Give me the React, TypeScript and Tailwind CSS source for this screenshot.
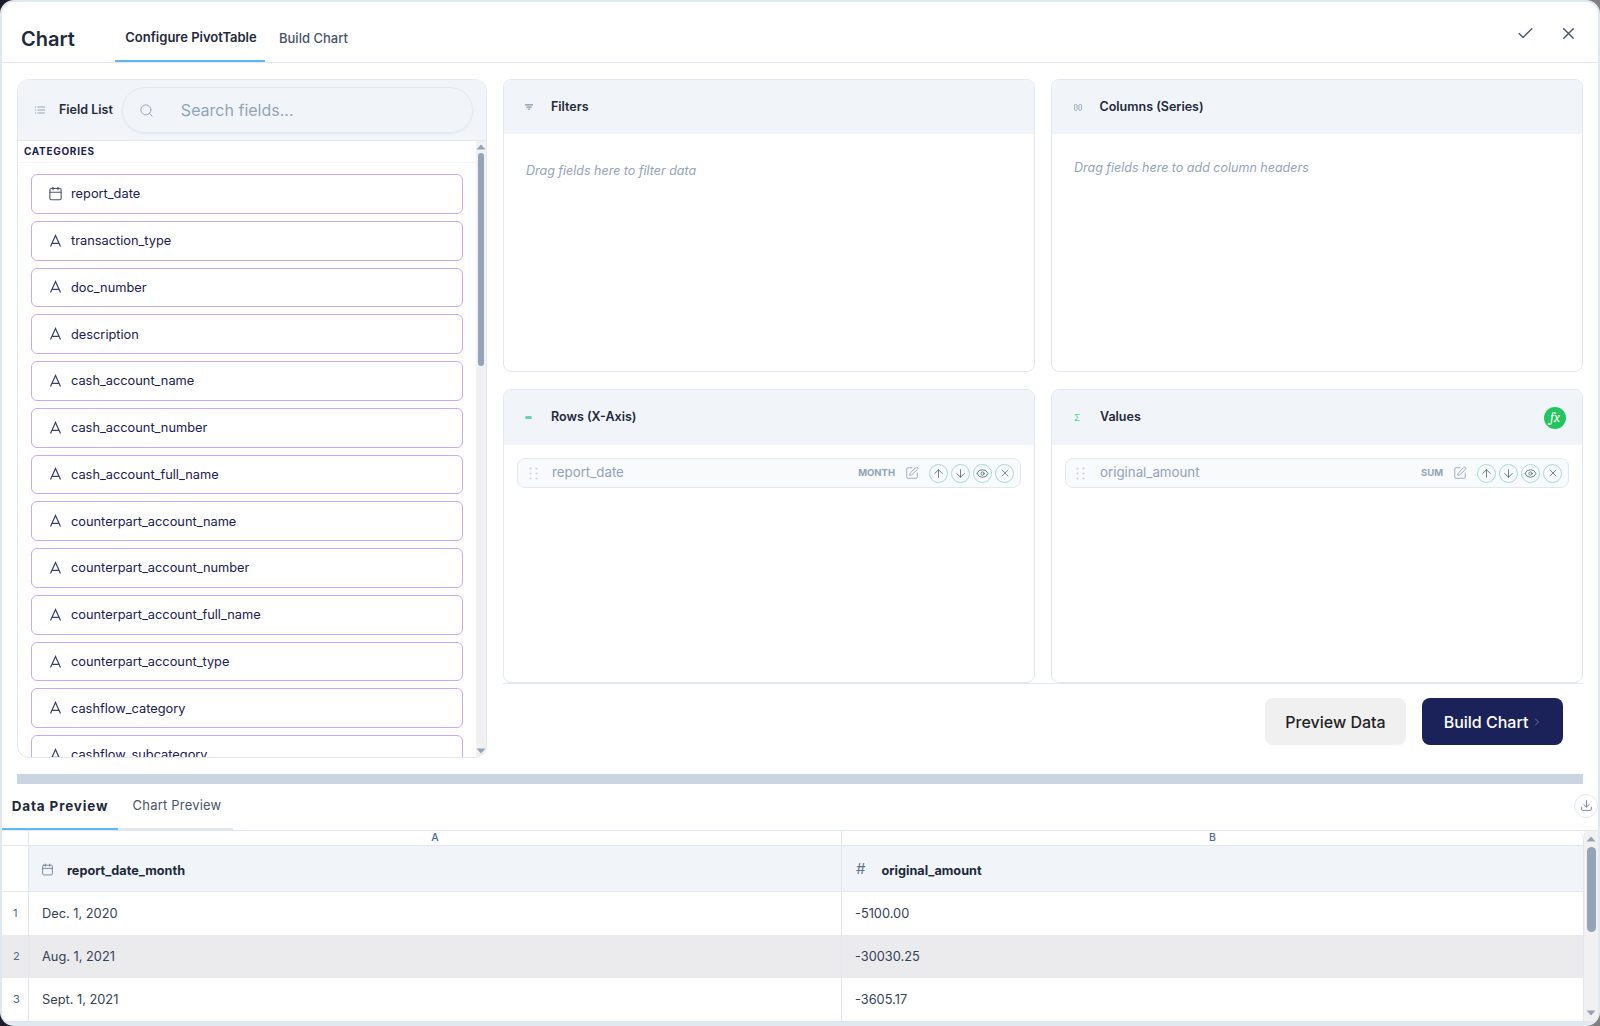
import { ArrowDown, ArrowUp, Calendar, Check, ChevronRight, Download, Eye, Search, SquarePen, X } from "lucide-react";

const fields = [
  "transaction_type",
  "doc_number",
  "description",
  "cash_account_name",
  "cash_account_number",
  "cash_account_full_name",
  "counterpart_account_name",
  "counterpart_account_number",
  "counterpart_account_full_name",
  "counterpart_account_type",
  "cashflow_category",
  "cashflow_subcategory",
];

const rows = [
  { n: 1, date: "Dec. 1, 2020", amount: "-5100.00" },
  { n: 2, date: "Aug. 1, 2021", amount: "-30030.25" },
  { n: 3, date: "Sept. 1, 2021", amount: "-3605.17" },
];

function TextIcon() {
  return (
    <svg width="16" height="16" viewBox="0 0 16 16" fill="none" stroke="#3a4168" strokeWidth="1.2" className="-ml-[0.5px]" aria-hidden>
      <path d="M2.5 13.5L7.5 2.5L12.5 13.5M4.2 10.3H10.8" />
    </svg>
  );
}

function FieldItem({ name, icon }: { name: string; icon: React.ReactNode }) {
  return (
    <div className="mb-[7px] flex h-[39.77px] shrink-0 items-center rounded-md border border-[#c8a8fa] bg-white pl-[16px] text-[12.8px] text-[#1a2050]">
      <span className="flex w-[23px] shrink-0 items-center">{icon}</span>
      {name}
    </div>
  );
}

function ScrollArrow({ up }: { up?: boolean }) {
  return (
    <svg width="10" height="6" viewBox="0 0 10 6" className="shrink-0" aria-hidden>
      <path d={up ? "M5 0.5L9.5 5.5H0.5Z" : "M0.5 0.5H9.5L5 5.5Z"} fill="#94a3b8" />
    </svg>
  );
}

function CircleBtn({ children }: { children: React.ReactNode }) {
  return (
    <span className="flex h-[19px] w-[19px] items-center justify-center rounded-full border border-[#a9dccf] text-[#47696b]">
      {children}
    </span>
  );
}

function PlacedField({ name, agg, gripClass }: { name: string; agg: string; gripClass: string }) {
  return (
    <div className="flex h-[30px] items-center rounded-lg border border-[#e2e8f0] bg-[#f8fafc] pr-[6px]">
      <svg width="9" height="13" viewBox="0 0 9 13" className={`shrink-0 ${gripClass}`} aria-hidden>
        {[1.5, 6.5, 11.5].map((y) => (
          <g key={y} fill="#cbd5e1">
            <circle cx="1.5" cy={y} r="1.1" />
            <circle cx="7.5" cy={y} r="1.1" />
          </g>
        ))}
      </svg>
      <span className="flex-1 text-[13.3px] text-[#94a3b8]">{name}</span>
      <span className="text-[9.5px] font-bold text-[#94a3b8]">{agg}</span>
      <SquarePen className="mr-[10px] ml-[10px] h-[14px] w-[14px] text-[#94a3b8]" strokeWidth={1.5} />
      <div className="flex gap-[3px]">
        <CircleBtn><ArrowUp className="h-[13px] w-[13px]" strokeWidth={1.5} /></CircleBtn>
        <CircleBtn><ArrowDown className="h-[13px] w-[13px]" strokeWidth={1.5} /></CircleBtn>
        <CircleBtn><Eye className="h-[13px] w-[13px]" strokeWidth={1.5} /></CircleBtn>
        <CircleBtn><X className="h-[12px] w-[12px]" strokeWidth={1.5} /></CircleBtn>
      </div>
    </div>
  );
}

function DropPanel({
  title,
  icon,
  extra,
  headerClass,
  children,
}: {
  title: string;
  icon: React.ReactNode;
  extra?: React.ReactNode;
  headerClass: string;
  children?: React.ReactNode;
}) {
  return (
    <section className="overflow-hidden rounded-lg border border-[#e2e8f0] bg-white">
      <div className={`flex items-center bg-[#f1f5f9] pr-[5px] ${headerClass}`}>
        <span className="flex w-[26px] shrink-0 items-center">{icon}</span>
        <h3 className="flex-1 text-[12.5px] font-semibold text-[#1e293b]">{title}</h3>
        {extra && <span className="mr-[11px]">{extra}</span>}
      </div>
      {children}
    </section>
  );
}

export default function App() {
  return (
    <div className="h-[1026px] w-[1600px] overflow-hidden bg-linear-to-r from-[#1c1c28] to-[#808080] font-[Inter,sans-serif]">
      <div className="flex h-full flex-col overflow-hidden rounded-[14px] border-2 border-[#e2e8f0] bg-white">
        <header className="flex h-[61px] shrink-0 items-center border-b border-[#e2e8f0]">
          <h1 className="ml-[19px] w-[94px] pt-[14px] text-[20px] font-semibold text-[#1e293b]">Chart</h1>
          <div className="flex h-full text-[13px]">
            <div className="flex w-[150px] items-center justify-center border-b-2 border-[#60b8f8] pt-[14px] pl-[2px] font-semibold text-[#1e293b]">
              Configure PivotTable
            </div>
            <div className="flex items-center pl-[14px] pt-[14px] font-medium text-[#475569]">Build Chart</div>
          </div>
          <div className="ml-auto flex items-center gap-[24px] pt-[2px] pr-[20px] text-[#475569]">
            <Check className="h-[19px] w-[19px]" strokeWidth={1.75} />
            <X className="h-[19px] w-[19px]" strokeWidth={1.75} />
          </div>
        </header>

        <div className="flex h-[711px] shrink-0 gap-4 px-[15px] pt-4">
          {/* field list */}
          <aside className="flex h-[679px] w-[470px] shrink-0 flex-col overflow-hidden rounded-xl border border-[#e2e8f0] bg-white">
            <div className="flex h-[61px] shrink-0 items-center border-b border-[#e2e8f0] bg-[#f1f5f9] pl-[17px]">
              <svg width="10" height="8" viewBox="0 0 10 8" className="mr-[14px] shrink-0" aria-hidden>
                <g stroke="#94a3b8" strokeWidth="1">
                  <path d="M0 1h1.2M2.5 1H10M0 4h1.2M2.5 4H10M0 7h1.2M2.5 7H10" />
                </g>
              </svg>
              <span className="text-[12.5px] font-semibold whitespace-nowrap text-[#1e293b]">Field List</span>
              <div className="ml-[9px] flex h-[46px] w-[351px] items-center rounded-full border border-[#e2e8f0] pl-[16px] shadow-[0_1px_2px_rgba(15,23,42,0.06)]">
                <Search className="h-[15px] w-[15px] text-[#94a3b8]" strokeWidth={1.5} />
                <span className="ml-[27px] text-[16px] text-[#94a3b8]">Search fields...</span>
              </div>
            </div>
            <div className="flex min-h-0 flex-1">
              <div className="min-w-0 flex-1 overflow-hidden">
                <div className="flex h-[22px] items-center border-b border-[#f1f5f9] pl-[6px] text-[10px] font-bold tracking-[0.7px] text-[#1a2050]">
                  CATEGORIES
                </div>
                <div className="flex flex-col pt-[11px] pl-[13px] pr-[13px]">
                  <FieldItem name="report_date" icon={<Calendar className="h-[15px] w-[15px] text-[#4a5178]" strokeWidth={1.75} />} />
                  {fields.map((f) => (
                    <FieldItem key={f} name={f} icon={<TextIcon />} />
                  ))}
                </div>
              </div>
              <div className="flex w-[10px] shrink-0 flex-col items-center bg-[#f1f1f1] py-[3px]">
                <ScrollArrow up />
                <div className="mt-[3px] h-[213px] w-[6px] rounded-full bg-[#94a3b8]" />
                <div className="flex-1" />
                <ScrollArrow />
              </div>
            </div>
          </aside>

          {/* drop zones */}
          <div className="flex min-w-0 flex-1 flex-col">
            <div className="grid h-[604px] shrink-0 grid-cols-2 grid-rows-[293px_294px] gap-x-4 gap-y-[17px] overflow-hidden">
              <DropPanel
                title="Filters"
                headerClass="h-[54px] pl-[21px]"
                icon={
                  <svg width="8" height="7" viewBox="0 0 9 8" aria-hidden>
                    <path d="M0 1h9M1.5 3.5h6M3 6h3" stroke="#8791a8" strokeWidth="1.3" />
                  </svg>
                }
              >
                <p className="pt-[28px] pl-[22px] text-[12.5px] text-[#94a3b8] italic">Drag fields here to filter data</p>
              </DropPanel>
              <DropPanel
                title="Columns (Series)"
                headerClass="h-[54px] pl-[21.5px]"
                icon={
                  <svg width="8" height="7" viewBox="0 0 8 7" aria-hidden>
                    <rect x="0.5" y="0.5" width="2.6" height="6" rx="1.2" fill="none" stroke="#94a3b8" strokeWidth="0.9" />
                    <rect x="4.9" y="0.5" width="2.6" height="6" rx="1.2" fill="none" stroke="#94a3b8" strokeWidth="0.9" />
                  </svg>
                }
              >
                <p className="pt-[25px] pl-[22px] text-[12.5px] text-[#94a3b8] italic">Drag fields here to add column headers</p>
              </DropPanel>
              <DropPanel
                title="Rows (X-Axis)"
                headerClass="h-[55px] pl-[21px]"
                icon={<span className="h-[3px] w-[7px] rounded-sm bg-[#6ecfbd]" />}
              >
                <div className="px-[13px] pt-[13px]">
                  <PlacedField name="report_date" agg="MONTH" gripClass="ml-[11px] mr-[14px]" />
                </div>
              </DropPanel>
              <DropPanel
                title="Values"
                headerClass="h-[55px] pl-[22px]"
                icon={<span className="text-[9px] leading-none text-[#4ade80]">Σ</span>}
                extra={
                  <span className="flex h-[22px] w-[22px] items-center justify-center rounded-full bg-[#22c55e] font-serif text-[14px] text-white italic">
                    fx
                  </span>
                }
              >
                <div className="px-[13px] pt-[13px]">
                  <PlacedField name="original_amount" agg="SUM" gripClass="ml-[10px] mr-[15px]" />
                </div>
              </DropPanel>
            </div>
            <div className="flex flex-1 items-start justify-end gap-4 border-t border-[#e2e8f0] pt-[14px] pr-[20px]">
              <button className="h-[47px] w-[141px] rounded-lg bg-[#f0f0f0] text-[16px] font-medium text-[#222222]">
                Preview Data
              </button>
              <button className="flex h-[47px] w-[141px] items-center justify-center rounded-lg bg-[#1a2259] pl-[2px] text-[16px] font-medium text-white">
                Build Chart
                <ChevronRight className="ml-[3px] h-[12px] w-[12px] text-[#8a90b0]" strokeWidth={1.5} />
              </button>
            </div>
          </div>
        </div>

        <div className="mx-[15px] h-[10px] shrink-0 bg-[#cbd5e1]" />

        {/* preview tabs */}
        <div className="flex h-[47px] shrink-0 items-stretch border-b border-[#e2e8f0] text-[13px]">
          <div className="flex w-[116px] items-center justify-center border-b-2 border-[#60b8f8] text-[13.5px] font-bold tracking-[0.85px] text-[#1e293b]">
            Data Preview
          </div>
          <div className="flex w-[115px] items-center justify-center border-b-2 border-[#e2e8f0] pl-[3px] tracking-[0.2px] text-[#475569]">
            Chart Preview
          </div>
          <div className="ml-auto flex items-center pb-[3px]">
            <span className="flex h-[24px] w-[24px] items-center justify-center rounded-full border border-[#e2e8f0] text-[#64748b]">
              <Download className="h-[13px] w-[13px]" strokeWidth={1.5} />
            </span>
          </div>
        </div>

        {/* data grid */}
        <div className="flex min-h-0 flex-1">
          <div className="min-w-0 flex-1 overflow-hidden rounded-t-lg border-r border-[#e2e8f0] text-[12.8px] text-[#334155]">
            <div className="flex h-[15px] border-b border-[#e2e8f0] text-[10.5px] font-medium text-[#4a6a9a]">
              <div className="w-[27px] shrink-0 border-r border-[#e2e8f0]" />
              <div className="flex w-[813px] shrink-0 items-center justify-center border-r border-[#e2e8f0]">A</div>
              <div className="flex flex-1 items-center justify-center">B</div>
            </div>
            <div className="flex h-[46px] border-b border-[#e2e8f0] bg-[#f1f5f9] text-[12.7px] font-bold text-[#1e293b]">
              <div className="w-[27px] shrink-0 border-r border-[#e2e8f0] bg-white" />
              <div className="flex w-[813px] shrink-0 items-center border-r border-[#e2e8f0] pl-[12px] pt-[5px]">
                <Calendar className="mr-[13px] mb-[4px] h-[13px] w-[13px] text-[#64748b]" strokeWidth={1.5} />
                report_date_month
              </div>
              <div className="flex flex-1 items-center pl-[14px] pt-[5px]">
                <span className="mr-[16px] mb-[4px] text-[15px] font-normal text-[#64748b]">#</span>
                original_amount
              </div>
            </div>
            {rows.map((r) => (
              <div key={r.n} className={`flex h-[43px] ${r.n === 2 ? "bg-[#ebebed]" : "bg-white"}`}>
                <div className="flex w-[27px] shrink-0 items-center border-r border-[#e2e8f0] pl-[11px] text-[11px] text-[#4a6a8a]">
                  {r.n}
                </div>
                <div className="flex w-[813px] shrink-0 items-center border-r border-[#e2e8f0] pl-[13px]">{r.date}</div>
                <div className="flex flex-1 items-center pl-[13px]">{r.amount}</div>
              </div>
            ))}
          </div>
          <div className="flex w-[14px] shrink-0 flex-col items-center bg-[#f1f1f1] py-[5px]">
            <ScrollArrow up />
            <div className="mt-[5px] h-[85px] w-[9px] rounded-full bg-[#94a3b8]" />
            <div className="flex-1" />
            <ScrollArrow />
          </div>
        </div>
        <div className="h-[3px] shrink-0 bg-[#e2e8f0]" />
      </div>
    </div>
  );
}
